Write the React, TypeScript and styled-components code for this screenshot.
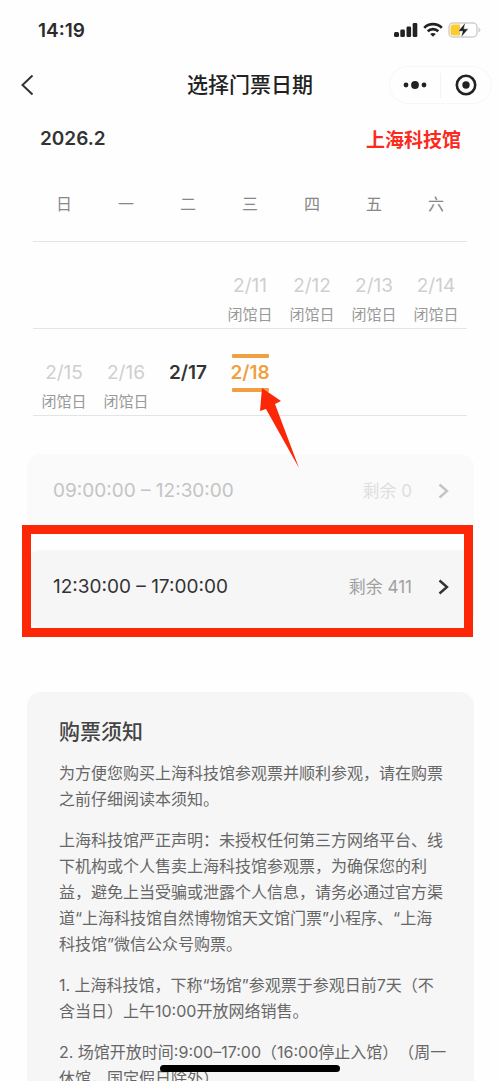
import React, { useState } from 'react';
import styled, { createGlobalStyle, css } from 'styled-components';

const GlobalStyle = createGlobalStyle`
  *, *::before, *::after { box-sizing: border-box; }
  body {
    margin: 0;
    background: #fefefe;
    color: #333;
    font-family: Inter, 'Noto Sans CJK SC', sans-serif;
  }
  button { font-family: inherit; }
`;

const Screen = styled.div`
  position: relative;
  display: flex;
  flex-direction: column;
  height: 100vh;
  overflow: hidden;
`;

const StatusBar = styled.div`
  flex: none;
  display: flex;
  align-items: center;
  justify-content: space-between;
  height: 60px;
  padding: 0 19px 0 38px;
`;

const Clock = styled.time`
  font-size: 19px;
  font-weight: 600;
  color: #2b2b2b;
`;

const StatusIcons = styled.div`
  display: flex;
  align-items: center;
  gap: 5px;
`;

const NavBar = styled.header`
  flex: none;
  display: grid;
  grid-template-columns: 1fr auto 1fr;
  align-items: center;
  height: 50px;
  padding: 0 8px;
`;

const IconButton = styled.button`
  display: flex;
  align-items: center;
  justify-content: center;
  padding: 0;
  border: 0;
  background: none;
  color: #333;
  cursor: pointer;
`;

const BackButton = styled(IconButton)`
  width: 38px;
  height: 30px;
`;

const PageTitle = styled.h1`
  margin: 0;
  font-size: 21px;
  line-height: 30px;
  font-weight: 500;
  color: #222;
`;

const Capsule = styled.div`
  justify-self: end;
  display: flex;
  width: 103px;
  height: 38px;
  border: 1px solid #f7f7f7;
  border-radius: 19px;

  ${IconButton} {
    flex: 1;
  }
`;

const CapsuleDivider = styled.span`
  align-self: center;
  width: 1px;
  height: 25px;
  background: #f3f3f3;
`;

const Content = styled.main`
  flex: 1;
  min-height: 0;
  overflow-y: auto;
  scrollbar-width: none;
`;

const MonthBar = styled.div`
  display: flex;
  align-items: center;
  justify-content: space-between;
  height: 56px;
  padding: 0 39px 0 40px;
`;

const Month = styled.h2`
  margin: 0;
  font-size: 19px;
  font-weight: 600;
  color: #333;
`;

const Venue = styled.strong`
  font-size: 19px;
  font-weight: 700;
  color: #fb2a1c;
`;

const CalendarWrap = styled.section`
  padding: 0 33px;
`;

const Calendar = styled.table`
  width: 100%;
  table-layout: fixed;
  border-collapse: collapse;
`;

const Weekday = styled.th`
  height: 75px;
  padding: 0;
  border-bottom: 1px solid #e4e4e4;
  font-size: 16px;
  font-weight: 400;
  color: #888;
`;

const DayCell = styled.td`
  position: relative;
  height: 87px;
  padding: 25px 0 0;
  border-bottom: 1px solid #e4e4e4;
  vertical-align: top;
  text-align: center;
`;

type DayState = 'closed' | 'open' | 'selected';

const dayColors: Record<DayState, string> = {
  closed: '#cfcfcf',
  open: '#333',
  selected: '#f0a040',
};

const DayButton = styled.button<{ $state: DayState }>`
  display: flex;
  flex-direction: column;
  align-items: center;
  width: 100%;
  padding: 0;
  border: 0;
  background: none;
  font-size: 19px;
  line-height: 30px;
  font-weight: ${(p) => (p.$state === 'closed' ? 400 : 600)};
  color: ${(p) => dayColors[p.$state]};
  cursor: ${(p) => (p.$state === 'closed' ? 'default' : 'pointer')};

  &::before,
  &::after {
    content: '';
    width: 37px;
    height: 4px;
    border-radius: 1px;
    ${(p) =>
      p.$state === 'selected' &&
      css`
        background: currentColor;
      `}
  }
`;

const DayNote = styled.div`
  font-size: 15px;
  line-height: 20px;
  color: #999;
`;

const Pointer = styled.svg`
  position: absolute;
  z-index: 2;
  top: 58px;
  left: 40px;
  pointer-events: none;
`;

const Slots = styled.section`
  display: flex;
  flex-direction: column;
  gap: 18px;
  padding: 38px 26px 0 27px;
`;

const SlotItem = styled.div`
  position: relative;
`;

const SlotButton = styled.button<{ $soldOut: boolean }>`
  display: flex;
  align-items: center;
  width: 100%;
  height: 78px;
  padding: 0 25px 3px 26px;
  border: 0;
  border-radius: 14px;
  background: ${(p) => (p.$soldOut ? '#fafafa' : '#f6f6f6')};
  color: ${(p) => (p.$soldOut ? '#c4c4c4' : '#333')};
  font-size: 19px;
  line-height: 24px;
  text-align: left;
  cursor: ${(p) => (p.$soldOut ? 'default' : 'pointer')};
`;

const SlotTime = styled.span`
  flex: 1;
`;

const SlotLeft = styled.span<{ $soldOut: boolean }>`
  margin-right: 26px;
  font-size: 17px;
  color: ${(p) => (p.$soldOut ? '#dedede' : '#a0a0a0')};
`;

const Highlight = styled.div`
  position: absolute;
  z-index: 1;
  top: -25px;
  right: 1px;
  bottom: -9px;
  left: -5px;
  border: 9px solid #fc2706;
  pointer-events: none;
`;

const Notice = styled.section`
  margin: 64px 26px 0 27px;
  padding: 24px 24px 40px 32px;
  border-radius: 14px;
  background: #f6f6f6;
`;

const NoticeTitle = styled.h2`
  margin: 0 0 12px;
  font-size: 21px;
  line-height: 32px;
  font-weight: 500;
  color: #444;
`;

const NoticeText = styled.p`
  margin: 0 0 15px;
  font-size: 16px;
  line-height: 26px;
  color: #666;
  text-spacing-trim: space-all;
`;

const Together = styled.span`
  white-space: nowrap;
`;

const HomeIndicator = styled.div`
  position: absolute;
  z-index: 3;
  bottom: 9px;
  left: 50%;
  width: 180px;
  height: 7px;
  margin-left: -90px;
  border-radius: 4px;
  background: #000;
`;

const SignalIcon = () => (
  <svg width="24" height="16" viewBox="0 0 24 16" fill="#222" aria-hidden="true">
    <rect x="0" y="10" width="5" height="5" rx="1.5" />
    <rect x="6.3" y="7.5" width="4.6" height="7.5" rx="1.3" />
    <rect x="12.5" y="4.5" width="4.6" height="10.5" rx="1.3" />
    <rect x="18.7" y="1" width="4.6" height="14" rx="1.3" />
  </svg>
);

const WifiIcon = () => (
  <svg width="20" height="16" viewBox="0 0 20 16" fill="none" stroke="#222" strokeWidth="2.6" aria-hidden="true">
    <path d="M1.2 5.8C6 .9 14 .9 18.8 5.8" />
    <path d="M4.7 9.3c3-2.9 7.6-2.9 10.6 0" />
    <path d="M10 14.8 7.2 12c1.6-1.5 4-1.5 5.6 0z" fill="#222" stroke="none" />
  </svg>
);

const BatteryIcon = () => (
  <svg width="33" height="18" viewBox="0 0 33 18" aria-hidden="true">
    <rect x="1" y="2" width="28" height="14" rx="4" fill="#fff" stroke="#cfcfcf" strokeWidth="1.5" />
    <path d="M5 3.5h7v11H5a2.500 2.500 0 0 1-2.500-2.500V6A2.500 2.500 0 0 1 5 3.500z" fill="#fccb2f" />
    <path d="M30.500 6.500c2.600 1 2.600 4 0 5z" fill="#cfcfcf" />
    <path d="M17.500 1.500 10 10.200h4.600L13 16.500l7.500-8.700h-4.600z" fill="#222" stroke="#fff" strokeWidth=".5" />
  </svg>
);

const BackIcon = () => (
  <svg width="14" height="22" viewBox="0 0 14 22" fill="none" stroke="currentColor" strokeWidth="2" aria-hidden="true">
    <path d="M12.5 1.5 2.5 11l10 9.5" />
  </svg>
);

const MoreIcon = () => (
  <svg width="24" height="10" viewBox="0 0 24 10" fill="#222" aria-hidden="true">
    <circle cx="3" cy="5" r="2.4" />
    <circle cx="12" cy="5" r="3.9" />
    <circle cx="21" cy="5" r="2.4" />
  </svg>
);

const CloseIcon = () => (
  <svg width="22" height="22" viewBox="0 0 22 22" aria-hidden="true">
    <circle cx="11" cy="11" r="9.2" fill="none" stroke="#222" strokeWidth="2.6" />
    <circle cx="11" cy="11" r="3.7" fill="#222" />
  </svg>
);

const ChevronIcon = () => (
  <svg width="11" height="16" viewBox="0 0 11 16" fill="none" stroke="currentColor" strokeWidth="2.4" aria-hidden="true">
    <path d="M1.5 1.5 9 8l-7.5 6.5" />
  </svg>
);

interface Day {
  date: string;
  open: boolean;
}

const weekdays = ['日', '一', '二', '三', '四', '五', '六'];

const weeks: (Day | null)[][] = [
  [
    null,
    null,
    null,
    { date: '2/11', open: false },
    { date: '2/12', open: false },
    { date: '2/13', open: false },
    { date: '2/14', open: false },
  ],
  [
    { date: '2/15', open: false },
    { date: '2/16', open: false },
    { date: '2/17', open: true },
    { date: '2/18', open: true },
    null,
    null,
    null,
  ],
];

const slots = [
  { time: '09:00:00 – 12:30:00', left: 0, highlighted: false },
  { time: '12:30:00 – 17:00:00', left: 411, highlighted: true },
];

export default function App() {
  const [selected, setSelected] = useState('2/18');

  return (
    <>
      <GlobalStyle />
      <Screen lang="zh-CN">
        <StatusBar>
          <Clock>14:19</Clock>
          <StatusIcons>
            <SignalIcon />
            <WifiIcon />
            <BatteryIcon />
          </StatusIcons>
        </StatusBar>

        <NavBar>
          <BackButton type="button" aria-label="返回">
            <BackIcon />
          </BackButton>
          <PageTitle>选择门票日期</PageTitle>
          <Capsule>
            <IconButton type="button" aria-label="更多">
              <MoreIcon />
            </IconButton>
            <CapsuleDivider />
            <IconButton type="button" aria-label="关闭">
              <CloseIcon />
            </IconButton>
          </Capsule>
        </NavBar>

        <Content>
          <MonthBar>
            <Month>2026.2</Month>
            <Venue>上海科技馆</Venue>
          </MonthBar>

          <CalendarWrap>
            <Calendar>
              <thead>
                <tr>
                  {weekdays.map((w) => (
                    <Weekday key={w} scope="col">
                      {w}
                    </Weekday>
                  ))}
                </tr>
              </thead>
              <tbody>
                {weeks.map((week, row) => (
                  <tr key={row}>
                    {week.map((day, col) => (
                      <DayCell key={col}>
                        {day && (
                          <DayButton
                            type="button"
                            disabled={!day.open}
                            $state={!day.open ? 'closed' : day.date === selected ? 'selected' : 'open'}
                            onClick={() => setSelected(day.date)}
                          >
                            {day.date}
                          </DayButton>
                        )}
                        {day && !day.open && <DayNote>闭馆日</DayNote>}
                        {day && day.date === selected && (
                          <Pointer width="42" height="82" viewBox="0 0 42 82" aria-hidden="true">
                            <path d="M3 1 22 14 16 17 40 81 7 22 1 24z" fill="#fc2706" />
                          </Pointer>
                        )}
                      </DayCell>
                    ))}
                  </tr>
                ))}
              </tbody>
            </Calendar>
          </CalendarWrap>

          <Slots>
            {slots.map((slot) => (
              <SlotItem key={slot.time}>
                <SlotButton type="button" disabled={slot.left === 0} $soldOut={slot.left === 0}>
                  <SlotTime>{slot.time}</SlotTime>
                  <SlotLeft $soldOut={slot.left === 0}>剩余 {slot.left}</SlotLeft>
                  <ChevronIcon />
                </SlotButton>
                {slot.highlighted && <Highlight />}
              </SlotItem>
            ))}
          </Slots>

          <Notice>
            <NoticeTitle>购票须知</NoticeTitle>
            <NoticeText>为方便您购买上海科技馆参观票并顺利参观，请在购票之前仔细阅读本须知。</NoticeText>
            <NoticeText>
              上海科技馆严正声明：未授权任何第三方网络平台、线下机构或个人售卖上海科技馆参观票，为确保您的利益，避免上当受骗或泄露个人信息，请务必通过官方渠道“上海科技馆自然博物馆天文馆门票”小程序、“上海
              <Together>科技馆”</Together>微信公众号购票。
            </NoticeText>
            <NoticeText>
              1. 上海科技馆，下称“场馆”参观票于参观日前7天（不<Together>含当日）</Together>上午10:00开放网络销售。
            </NoticeText>
            <NoticeText>2. 场馆开放时间:9:00–17:00（16:00停止入馆）（周一休馆，国定假日除外）</NoticeText>
          </Notice>
        </Content>

        <HomeIndicator />
      </Screen>
    </>
  );
}
